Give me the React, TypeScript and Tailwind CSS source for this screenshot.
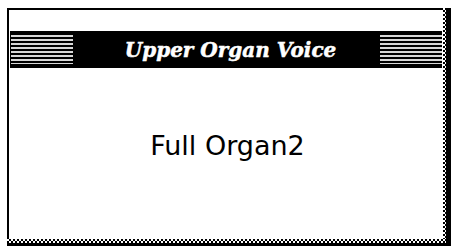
import React from "react";

const Stripes = () => (
  <div className="w-[62px] self-stretch my-[4px] bg-[repeating-linear-gradient(to_bottom,#d8d8d8_0px,#d8d8d8_2px,#000_2px,#000_4px)]" />
);

export default function App() {
  return (
    <div className="w-[451px] h-[246px] bg-white pl-[7px] pt-[8px]">
      <div className="grid grid-cols-[436px_3px_5px] grid-rows-[231px_4px_3px]">
        <div className="border-l-2 border-t-2 border-black bg-white flex flex-col">
          <div className="h-[21px]" />
          <div className="mx-[1px] h-[37px] bg-black flex items-stretch">
            <div className="w-[1px]" />
            <Stripes />
            <div className="flex-1 flex items-center justify-center pl-[8px]">
              <span
                className="text-white text-[20px] font-bold italic leading-none [-webkit-text-stroke:0.5px_white]"
                style={{ fontFamily: '"DejaVu Serif", serif' }}
              >
                Upper Organ Voice
              </span>
            </div>
            <Stripes />
          </div>
          <div className="flex-1 flex items-center justify-center pb-[16px] pl-[3px]">
            <span
              className="text-black text-[27px] leading-none"
              style={{ fontFamily: '"DejaVu Sans", sans-serif' }}
            >
              Full Organ2
            </span>
          </div>
        </div>
        <div className="bg-[conic-gradient(#000_25%,#fff_0_50%,#000_0_75%,#fff_0)] bg-[length:4px_4px]" />
        <div className="bg-black" />
        <div className="bg-[conic-gradient(#000_25%,#fff_0_50%,#000_0_75%,#fff_0)] bg-[length:4px_4px]" />
        <div className="bg-[conic-gradient(#000_25%,#fff_0_50%,#000_0_75%,#fff_0)] bg-[length:4px_4px]" />
        <div className="bg-black" />
        <div className="bg-black" />
        <div className="bg-black" />
        <div className="bg-black" />
      </div>
    </div>
  );
}
